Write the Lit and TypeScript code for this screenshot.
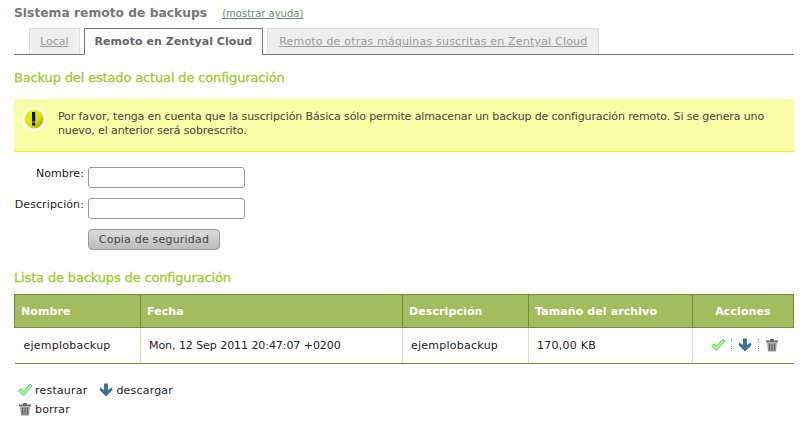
import { LitElement, html, css, svg } from "lit";
import { customElement } from "lit/decorators.js";

const check = svg`<svg class="ico" width="16" height="16" viewBox="0 0 16 16"><path d="M1.5 9 L3.8 6.8 L6.3 9.2 L13 2.2 L15 4 L6.4 13.5 Z" fill="#a6f2a0" stroke="#55d455" stroke-width="1"/></svg>`;
const down = svg`<svg class="ico" width="16" height="16" viewBox="0 0 16 16"><path d="M6 1.5 H10 V8 L13.5 5.5 L14.5 8 L8 14.5 L1.5 8 L2.5 5.5 L6 8 Z" fill="#3f7198"/></svg>`;
const trash = svg`<svg class="ico" width="16" height="16" viewBox="0 0 16 16"><path d="M2 3.5 H14 V5.5 H2 Z M6 2 H10 V3.5 H6 Z" fill="#6a6a6a"/><path d="M3.2 6 H12.8 L12 14.5 H4 Z" fill="#9a9a9a"/><path d="M5.5 7 V13.5 M8 7 V13.5 M10.5 7 V13.5" stroke="#5c5c5c" stroke-width="1"/></svg>`;

@customElement("app-root")
export class AppRoot extends LitElement {
  static styles = css`
    :host { display: block; width: 810px; height: 432px; overflow: hidden; background: #fff;
      font-family: "DejaVu Sans", sans-serif; font-size: 11px; color: #222; }
    .page { padding: 0 16px 0 14px; }
    .title { display: flex; align-items: baseline; gap: 15px; height: 28px; box-sizing: border-box; padding-top: 3px; }
    .title h2 { margin: 0; font-size: 12.3px; font-weight: bold; color: #777; line-height: 20px; }
    .title a { font-size: 10px; color: #5e8f6e; text-decoration: underline; }
    .tabs { display: flex; gap: 4px; padding-left: 15px; height: 27px; box-sizing: border-box; border-bottom: 1px solid #777; }
    .tab { height: 26px; box-sizing: border-box; padding: 0 10px; background: #eee; border: 1px solid #ddd; border-bottom: 0;
      color: #999; text-decoration: underline; line-height: 26px; }
    .tab.wide { padding: 0 11px; letter-spacing: 0.19px; }
    .tab.active { height: 27px; background: #fff; border: 1px solid #777; border-bottom: 0; color: #666; font-weight: bold; text-decoration: none; letter-spacing: 0.05px; }
    h3 { margin: 0; font-size: 13px; letter-spacing: -0.15px; font-weight: normal; color: #a3c92f; -webkit-text-stroke: 0.3px #a3c92f; line-height: 20px; }
    .h1 { margin-top: 13px; }
    .note { margin-top: 11px; height: 53px; box-sizing: border-box; background: #f8fca4; border-bottom: 1px solid #eef800;
      display: flex; align-items: flex-start; gap: 12px; padding: 8px 8px 0; color: #444; line-height: 14px; letter-spacing: -0.12px; }
    .note svg { flex: none; }
    .note div { margin-top: 3px; }
    .form { margin-top: 15px; display: grid; grid-template-columns: 70px 157px; column-gap: 4px; row-gap: 10px; align-items: start; }
    .form label { text-align: right; color: #222; letter-spacing: 0.1px; }
    .field { height: 21px; box-sizing: border-box; border: 1px solid #999; border-radius: 3px; background: #fff; }
    .btn { grid-column: 2; justify-self: start; height: 21px; width: 132px; box-sizing: border-box; border: 1px solid #999; border-radius: 4px;
      background: linear-gradient(#ddd, #bbb); color: #444; text-align: center; line-height: 19px; letter-spacing: 0.2px; }
    .h2 { margin-top: 18px; }
    table { margin-top: 6px; width: 779px; table-layout: fixed; border-collapse: collapse; }
    th { height: 33px; padding: 0 6px; box-sizing: border-box; background: #a3bd5e; color: #fff; font-size: 11px; text-align: left;
      border: 1px solid #6f8a3c; letter-spacing: 0.1px; }
    th.center { text-align: center; }
    td { height: 36px; padding: 0 8px; box-sizing: border-box; border: 1px solid #d8dcc0; border-bottom: 1px solid #6f8a3c; border-top: 0; color: #222; letter-spacing: 0.25px; }
    td:first-child { border-left: 0; padding-left: 9px; }
    td:last-child { border-right: 0; }
    td.date { letter-spacing: -0.06px; }
    td.acts { text-align: center; padding: 2px 0 0 3px; }
    .actions { display: inline-flex; align-items: center; gap: 5px; }
    .ico { display: block; flex: none; }
    .sep { width: 0; height: 12px; border-left: 1px dotted #aaa; }
    .legend { margin-top: 18px; padding-left: 3px; display: flex; flex-wrap: wrap; column-gap: 11px; row-gap: 3px; width: 170px; color: #222; letter-spacing: 0.2px; }
    .legend span { display: inline-flex; align-items: center; gap: 2px; height: 16px; }
  `;

  render() {
    return html`<div class="page">
      <div class="title"><h2>Sistema remoto de backups</h2><a>(mostrar ayuda)</a></div>
      <div class="tabs">
        <div class="tab">Local</div>
        <div class="tab active">Remoto en Zentyal Cloud</div>
        <div class="tab wide">Remoto de otras máquinas suscritas en Zentyal Cloud</div>
      </div>
      <h3 class="h1">Backup del estado actual de configuración</h3>
      <div class="note">
        <svg width="24" height="24" viewBox="0 0 24 24"><circle cx="12" cy="12" r="12" fill="#fff"/><defs><linearGradient id="g" x1="0" y1="0" x2="1" y2="1"><stop offset="0" stop-color="#f0f600"/><stop offset="0.6" stop-color="#d8e000"/><stop offset="1" stop-color="#8a9600"/></linearGradient></defs><circle cx="12" cy="12" r="9.5" fill="url(#g)"/><rect x="10" y="5" width="3.2" height="9.5" fill="#111"/><rect x="10" y="15.5" width="3.2" height="3" fill="#111"/></svg>
        <div>Por favor, tenga en cuenta que la suscripción Básica sólo permite almacenar un backup de configuración remoto. Si se genera uno nuevo, el anterior será sobrescrito.</div>
      </div>
      <div class="form">
        <label>Nombre:</label><div class="field"></div>
        <label>Descripción:</label><div class="field"></div>
        <div class="btn">Copia de seguridad</div>
      </div>
      <h3 class="h2">Lista de backups de configuración</h3>
      <table>
        <colgroup><col style="width:126px"/><col style="width:262px"/><col style="width:126px"/><col style="width:164px"/><col style="width:101px"/></colgroup>
        <thead><tr><th>Nombre</th><th>Fecha</th><th>Descripción</th><th>Tamaño del archivo</th><th class="center">Acciones</th></tr></thead>
        <tbody><tr><td>ejemplobackup</td><td class="date">Mon, 12 Sep 2011 20:47:07 +0200</td><td>ejemplobackup</td><td>170,00 KB</td>
          <td class="acts"><span class="actions">${check}<i class="sep"></i>${down}<i class="sep"></i>${trash}</span></td></tr></tbody>
      </table>
      <div class="legend">
        <span>${check} restaurar</span><span>${down} descargar</span><span>${trash} borrar</span>
      </div>
    </div>`;
  }
}
